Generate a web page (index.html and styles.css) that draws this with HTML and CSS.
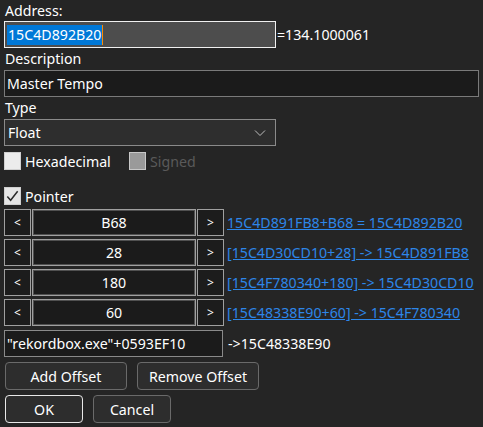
FILE: index.html
```html
<!DOCTYPE html>
<html>
<head>
<meta charset="utf-8">
<link rel="stylesheet" href="styles.css">
</head>
<body>
<div class="dlg">
  <div class="lbl lbl-first">Address:</div>
  <div class="row">
    <div class="inp addr"><span class="sel">15C4D892B20</span><span class="caret"></span></div>
    <span class="val">=134.1000061</span>
  </div>
  <div class="lbl">Description</div>
  <div class="inp desc">Master Tempo</div>
  <div class="lbl">Type</div>
  <div class="select">
    <span>Float</span>
    <svg class="chev" width="12" height="8" viewBox="0 0 12 8"><path d="M1 1.5 L6 6.5 L11 1.5" fill="none" stroke="#bdbdbd" stroke-width="1"/></svg>
  </div>
  <div class="checks">
    <label class="chk"><span class="box"></span><span>Hexadecimal</span></label>
    <label class="chk disabled"><span class="box"></span><span>Signed</span></label>
  </div>
  <label class="chk pointer"><span class="box checked"><svg width="16" height="16" viewBox="0 0 16 16"><path d="M2.5 8.5 L6 12.5 L13.5 3" fill="none" stroke="#2a2a2a" stroke-width="1.6"/></svg></span><span>Pointer</span></label>
  <div class="offsets">
    <div class="orow"><div class="ob">&lt;</div><div class="of">B68</div><div class="ob">&gt;</div><a class="lnk">15C4D891FB8+B68 = 15C4D892B20</a></div>
    <div class="orow"><div class="ob">&lt;</div><div class="of">28</div><div class="ob">&gt;</div><a class="lnk">[15C4D30CD10+28] -&gt; 15C4D891FB8</a></div>
    <div class="orow"><div class="ob">&lt;</div><div class="of">180</div><div class="ob">&gt;</div><a class="lnk">[15C4F780340+180] -&gt; 15C4D30CD10</a></div>
    <div class="orow"><div class="ob">&lt;</div><div class="of">60</div><div class="ob">&gt;</div><a class="lnk">[15C48338E90+60] -&gt; 15C4F780340</a></div>
  </div>
  <div class="baserow">
    <div class="inp base">"rekordbox.exe"+0593EF10</div>
    <span class="arrow">-&gt;15C48338E90</span>
  </div>
  <div class="btns">
    <button class="btn wide">Add Offset</button>
    <button class="btn wide">Remove Offset</button>
  </div>
  <div class="btns last">
    <button class="btn narrow default">OK</button>
    <button class="btn narrow">Cancel</button>
  </div>
</div>
</body>
</html>
```
FILE: styles.css
```css
* { box-sizing: border-box; }
html, body { margin: 0; padding: 0; }
body {
  background: #252525;
  color: #ffffff;
  font-family: "Noto Sans", "Open Sans", sans-serif;
  font-size: 14.2px;
  width: 483px;
  height: 427px;
  overflow: hidden;
}
.dlg { padding: 0 4px; display: flex; flex-direction: column; }
.lbl { height: 22px; line-height: 22px; padding-left: 1px; }
.lbl-first { height: 21px; line-height: 21px; }
.row { display: flex; align-items: center; height: 27px; }
.inp {
  height: 27px;
  border: 1px solid #7a7a7a;
  background: #1b1b1b;
  padding: 0 2px;
  display: flex;
  align-items: center;
  white-space: nowrap;
}
.addr {
  width: 272px;
  height: 27px;
  border: 1.5px solid #f0f0f0;
  background: #4d4d4d;
}
.sel { background: #0078d7; color: #fff; padding: 0 1px; line-height: 20px; }
.caret { width: 1px; height: 20px; background: #ff8c00; }
.val { margin-left: 1px; }
.desc { width: 475px; }
.select {
  width: 272px;
  height: 27px;
  border: 1px solid #8a8a8a;
  background: #2e2e2e;
  display: flex;
  align-items: center;
  justify-content: space-between;
  padding: 0 9px 0 3px;
}
.chev { display: block; }
.checks { display: flex; gap: 4px; margin-top: 6px; height: 18px; align-items: center; }
.chk { display: flex; align-items: center; gap: 4px; height: 18px; }
.box {
  width: 17px; height: 18px;
  background: #ececec;
  border: 1px solid #d0d0d0;
  display: flex; align-items: center; justify-content: center;
}
.disabled .box { background: #9a9a9a; border: 1px solid #c8c8c8; }
.disabled span:last-child { color: #5a5a5a; }
.checks .chk:first-child { width: 121px; }
.pointer { margin-top: 17px; }
.pointer .box { background: #e6e6e6; }
.offsets { display: flex; flex-direction: column; gap: 3px; margin-top: 4px; }
.orow { display: flex; align-items: center; height: 27px; }
.ob {
  width: 27px; height: 27px;
  border: 1px solid #a0a0a0;
  background: #1c1c1c;
  display: flex; align-items: center; justify-content: center;
  font-size: 12px;
}
.of {
  width: 164px; height: 27px;
  border: 1px solid #a0a0a0;
  box-shadow: inset 0 0 0 1px #505050;
  background: #1b1b1b;
  display: flex; align-items: center; justify-content: center;
  margin: 0 1px;
}
.lnk {
  margin-left: 3px;
  color: #2d86e8;
  text-decoration: underline;
  white-space: nowrap;
}
.baserow { display: flex; align-items: center; margin-top: 4px; height: 27px; }
.base { width: 219px; border: 1px solid #8a8a8a; height: 27px; }
.arrow { margin-left: 5px; }
.btns { display: flex; gap: 10px; margin-top: 5px; padding-left: 1px; }
.btn {
  font: inherit;
  color: #fff;
  background: #2d2d2d;
  border: 1px solid #6a6a6a;
  border-radius: 4px;
  height: 28px;
  padding: 0;
}
.wide { width: 122px; }
.narrow { width: 78px; }
.last { margin-top: 5px; }
.default { border: 1px solid #e8e8e8; }
```
